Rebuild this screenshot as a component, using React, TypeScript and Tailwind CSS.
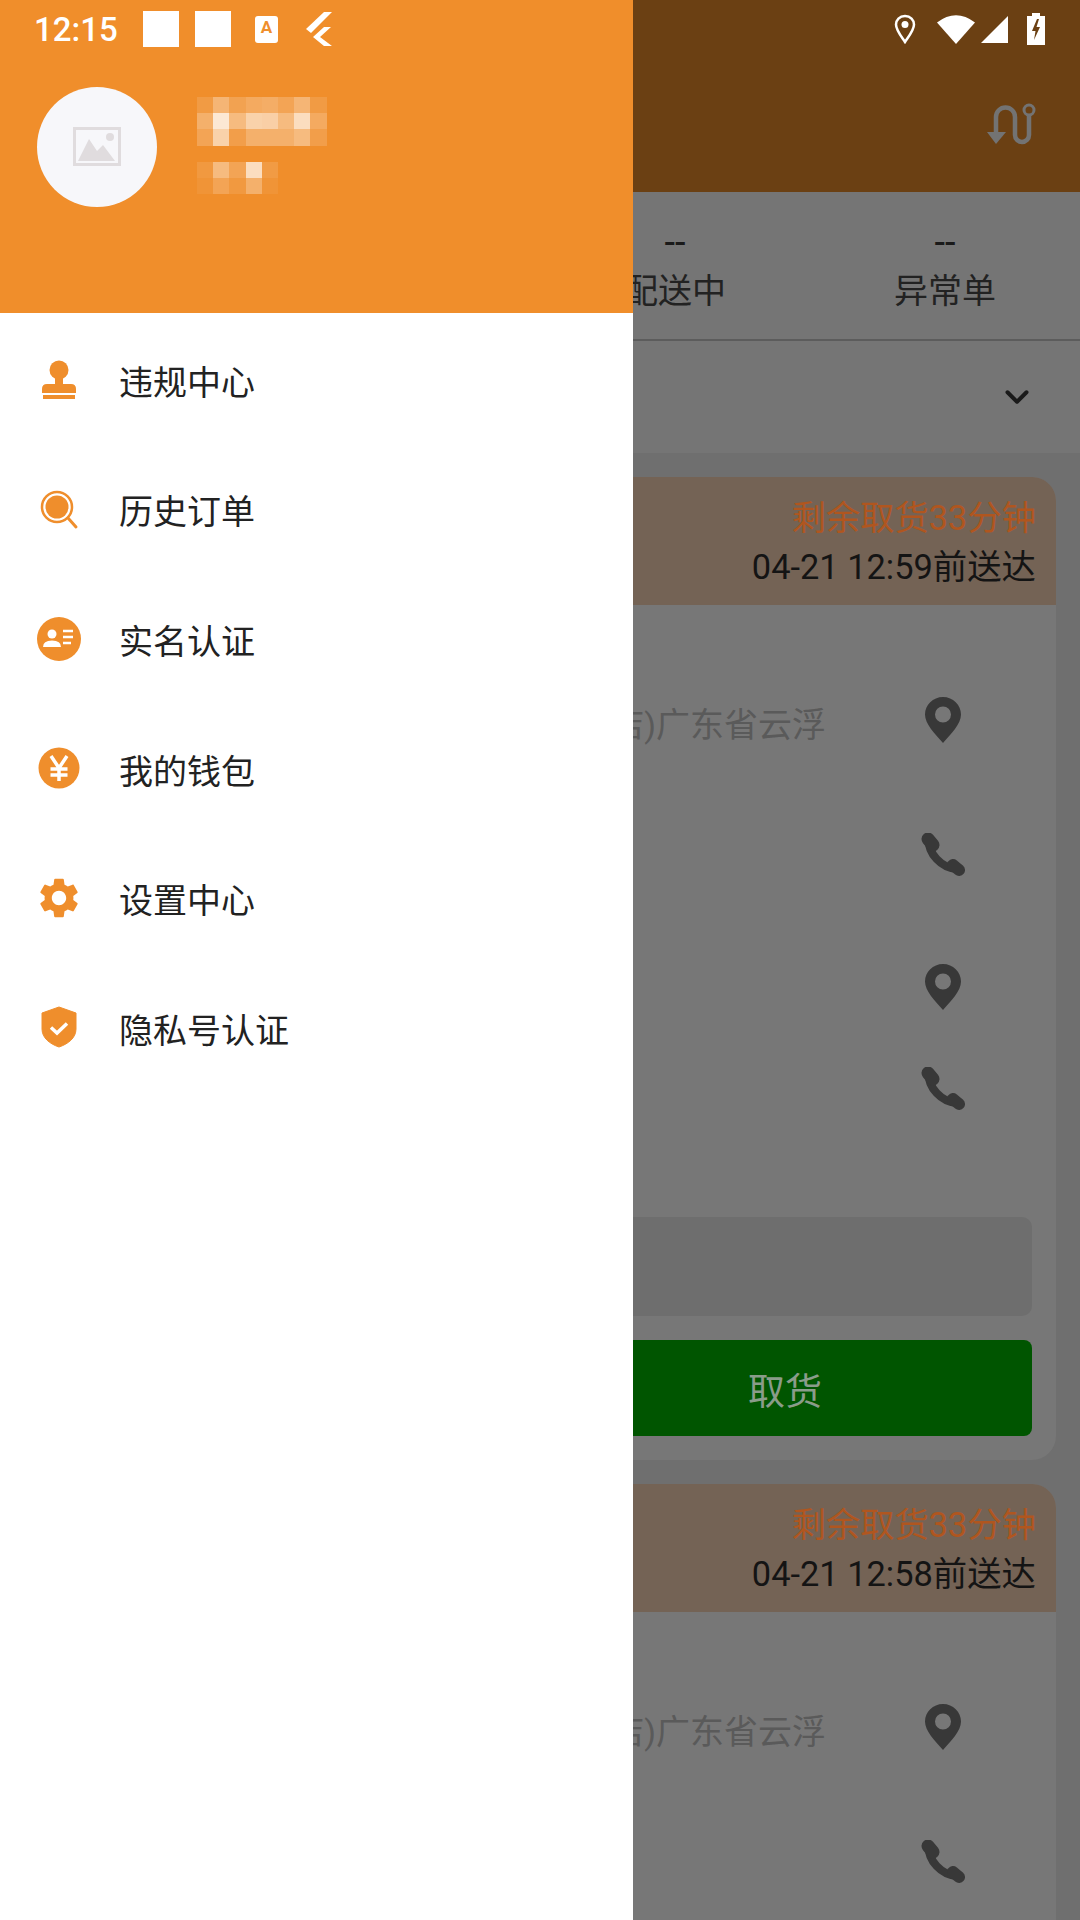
import React from 'react';
import { ChevronDown } from 'lucide-react';

const ORANGE = '#EF8E2C';

const nameCells = [
  [0.12, 0.35, 0.18, 0.25, 0.28, 0.2, 0.35, 0.12],
  [0.3, 0.8, 0.4, 0.6, 0.58, 0.4, 0.7, 0.25],
  [0.2, 0.6, 0.15, 0.3, 0.3, 0.3, 0.4, 0.15],
];
const phoneCells = [
  [0.1, 0.4, 0.2, 0.7, 0.12],
  [0.06, 0.2, 0.1, 0.3, 0.06],
];

const Mosaic: React.FC<{ rows: number[][] }> = ({ rows }) => (
  <div className="flex flex-col">
    {rows.map((row, i) => (
      <div key={i} className="flex">
        {row.map((a, j) => (
          <div key={j} className="w-[16.2px] h-[16.2px]" style={{ backgroundColor: `rgba(255,255,255,${a})` }} />
        ))}
      </div>
    ))}
  </div>
);

const PinIcon = () => (
  <svg width="36" height="46" viewBox="0 0 36 46">
    <path
      fillRule="evenodd"
      fill="#383838"
      d="M18 0C8 0 0 8 0 17.5C0 27 10 37 18 46C26 37 36 27 36 17.5C36 8 28 0 18 0ZM18 9.500A8 8 0 1 1 18 25.500A8 8 0 1 1 18 9.500Z"
    />
  </svg>
);

const PhoneIcon = () => (
  <svg width="44" height="44" viewBox="0 0 44 44" fill="none">
    <path d="M8 7C7 20 20 35 36 36" stroke="#383838" strokeWidth="8" strokeLinecap="round" />
    <path d="M7 6L12 12" stroke="#383838" strokeWidth="13" strokeLinecap="round" />
    <path d="M32 32L38 37" stroke="#383838" strokeWidth="12" strokeLinecap="round" />
  </svg>
);

const IconCell: React.FC<{ children: React.ReactNode }> = ({ children }) => (
  <div className="w-[60px] flex justify-center">{children}</div>
);

// the second card runs off the bottom of the screen, so it stops after the first phone row
const OrderCard: React.FC<{ deadline: string; cut?: boolean }> = ({ deadline, cut }) => (
  <div className="mx-6 mb-6 bg-[#777777] rounded-3xl overflow-hidden">
    <div className="h-[128px] bg-[#746355] pt-[15px] pr-5 flex flex-col items-end leading-[50px]">
      <div className="text-[34.3px] text-[#b0561f] pt-[1px] -mb-[1px]">剩余取货33分钟</div>
      <div className="text-[34.4px] text-[#141414]">{deadline}</div>
    </div>
    <div className={cut ? 'px-6 pt-[92px] pb-[100px]' : 'px-6 pt-[92px] pb-6'}>
      <div className="h-[46px] flex items-center justify-end gap-[87px] pr-[59px]">
        <span className="text-[34px] text-[#5a5a5a] whitespace-nowrap mt-[10px]">(店)广东省云浮</span>
        <IconCell>
          <PinIcon />
        </IconCell>
      </div>
      <div className="mt-[90px] flex justify-end pr-[59px]">
        <IconCell>
          <PhoneIcon />
        </IconCell>
      </div>
      {!cut && (
        <>
          <div className="mt-[87px] flex justify-end pr-[59px]">
            <IconCell>
              <PinIcon />
            </IconCell>
          </div>
          <div className="mt-[57px] flex justify-end pr-[59px]">
            <IconCell>
              <PhoneIcon />
            </IconCell>
          </div>
          <div className="mt-[106px] h-[99px] bg-[#6e6e6e] rounded-[10px]" />
          <div className="mt-6 ml-auto w-[494px] h-[96px] pt-[10px] bg-[#005500] rounded-lg flex items-center justify-center text-[37px] text-[#8a9c8a]">
            取货
          </div>
        </>
      )}
    </div>
  </div>
);

const StampIcon = () => (
  <svg width="48" height="48" viewBox="0 0 48 48" fill={ORANGE}>
    <circle cx="24" cy="12" r="9.500" />
    <rect x="20" y="17" width="8" height="11" />
    <path d="M7 35V31Q7 26 12 26H36Q41 26 41 31V35Z" />
    <rect x="8" y="37" width="32" height="4" />
  </svg>
);

const SearchIcon = () => (
  <svg width="48" height="48" viewBox="0 0 48 48" fill="none">
    <circle cx="22" cy="20" r="15" stroke={ORANGE} strokeWidth="2.500" />
    <circle cx="22" cy="20" r="11.500" fill={ORANGE} />
    <path d="M33 31L41 40" stroke={ORANGE} strokeWidth="3" strokeLinecap="round" />
  </svg>
);

const IdIcon = () => (
  <svg width="48" height="48" viewBox="0 0 48 48">
    <circle cx="24" cy="22" r="22" fill={ORANGE} />
    <circle cx="17" cy="17" r="4.500" fill="#fff" />
    <path d="M8 30Q8 23.500 17 23.500Q26 23.500 26 30Z" fill="#fff" />
    <path d="M28 14H38M28 20H38M28 26H36" stroke="#fff" strokeWidth="2.500" />
  </svg>
);

const YenIcon = () => (
  <svg width="48" height="48" viewBox="0 0 48 48">
    <circle cx="24" cy="21" r="20.500" fill={ORANGE} />
    <path d="M16 9L24 21L32 9M15.500 22H32.500M15.500 28H32.500M24 21V34" fill="none" stroke="#fff" strokeWidth="3.500" />
  </svg>
);

const GearIcon = () => (
  <svg className="-mt-1" width="52" height="52" viewBox="0 0 24 24" fill={ORANGE}>
    <path d="M19.14 12.94c.04-.3.06-.61.06-.94 0-.32-.02-.64-.07-.94l2.03-1.58c.18-.14.23-.41.12-.61l-1.920-3.320c-.12-.22-.37-.29-.59-.22l-2.390.96c-.5-.38-1.030-.7-1.620-.94l-.36-2.540c-.04-.24-.24-.41-.48-.41h-3.840c-.24 0-.43.17-.47.41l-.36 2.540c-.59.24-1.130.57-1.620.94l-2.390-.96c-.22-.08-.47 0-.59.22L2.740 8.870c-.12.21-.08.47.12.61l2.030 1.580c-.05.3-.09.63-.09.94s.02.64.07.94l-2.030 1.580c-.18.14-.23.41-.12.61l1.920 3.320c.12.22.37.29.59.22l2.390-.96c.5.38 1.030.7 1.620.94l.36 2.540c.05.24.24.41.48.41h3.840c.24 0 .44-.17.47-.41l.36-2.540c.59-.24 1.130-.56 1.620-.94l2.390.96c.22.08.47 0 .59-.22l1.920-3.320c.12-.22.07-.47-.12-.61l-2.010-1.580zM12 15.600c-1.980 0-3.600-1.620-3.600-3.600s1.620-3.600 3.600-3.600 3.600 1.620 3.600 3.600-1.620 3.600-3.600 3.600z" />
  </svg>
);

const ShieldIcon = () => (
  <svg className="-mt-1" width="48" height="48" viewBox="0 0 48 48">
    <path d="M24 3L41 9V25C41 34 33 40 24 43C15 40 7 34 7 25V9Z" fill={ORANGE} stroke={ORANGE} strokeLinejoin="round" strokeWidth="1" />
    <path d="M16 23.500L22 29L32 19.500" fill="none" stroke="#fff" strokeWidth="3.500" />
  </svg>
);

const menu = [
  { label: '违规中心', icon: <StampIcon /> },
  { label: '历史订单', icon: <SearchIcon /> },
  { label: '实名认证', icon: <IdIcon /> },
  { label: '我的钱包', icon: <YenIcon /> },
  { label: '设置中心', icon: <GearIcon /> },
  { label: '隐私号认证', icon: <ShieldIcon /> },
];

const StatusBar = () => (
  <div className="absolute top-0 left-0 w-full h-[58px] flex items-center text-white pl-[34px] pr-[35px]">
    <span className="text-[33px] font-medium leading-none w-[109px]">12:15</span>
    <div className="w-9 h-9 bg-white" />
    <div className="w-9 h-9 bg-white ml-4" />
    <div className="w-[23px] h-[27px] ml-[24px] bg-white rounded-[3px] flex justify-center text-[17px] font-bold leading-[22px] text-[#EF8E2C]">
      A
    </div>
    <svg className="ml-[27px]" width="28" height="34" viewBox="0 0 28 34" fill="#fff">
      <polygon points="19,0 27,0 6,21 1,17" />
      <polygon points="19,15 26,15 15,25 27,34 19,34 8,25" />
    </svg>
    <svg className="ml-auto" width="22" height="30" viewBox="0 0 22 30" fill="none">
      <path d="M11 2C5.500 2 2 6 2 10.500C2 16 7 22 11 28C15 22 20 16 20 10.500C20 6 16.500 2 11 2Z" stroke="#fff" strokeWidth="2.500" />
      <circle cx="11" cy="10.500" r="3.500" fill="#fff" />
    </svg>
    <svg className="ml-[21px]" width="38" height="30" viewBox="0 0 38 30" fill="#fff">
      <path d="M0 8.500Q19 -6 38 8.500L19 30Z" />
    </svg>
    <svg className="ml-[6px]" width="27" height="27" viewBox="0 0 27 27" fill="#fff">
      <polygon points="27,0 27,27 0,27" />
    </svg>
    <svg className="ml-[19px]" width="18" height="32" viewBox="0 0 18 32">
      <path d="M5 0H13V3H18V32H0V3H5Z" fill="#fff" />
      <path d="M10 6L5 18H8.500L7 27L13 14H9.500L12 6Z" fill="#6B4013" />
    </svg>
  </div>
);

export default function App() {
  return (
    <div className="relative w-[1080px] h-[1920px] overflow-hidden bg-[#6f6f6f] font-['Roboto','Noto_Sans_CJK_SC',sans-serif]">
      {/* page behind the drawer */}
      <div className="h-[192px] bg-[#6B4013] flex items-end justify-end pr-[44px] pb-[46px]">
        <svg width="50" height="44" viewBox="0 0 50 44" fill="none" stroke="#737373">
          <path d="M10 32V15a9.500 9.500 0 0 1 19 0V33a7 7 0 0 0 14 0V13" strokeWidth="4.500" />
          <circle cx="43" cy="8" r="5" strokeWidth="3" />
          <polygon points="1,30 20,30 10,42" fill="#737373" stroke="none" />
        </svg>
      </div>
      <div className="h-[149px] bg-[#757575] border-b-2 border-[#5c5c5c] grid grid-cols-4 text-center pt-[30px]">
        <div />
        <div />
        <div>
          <div className="text-[38px] leading-[40px] text-[#1a1a1a]">--</div>
          <div className="text-[34px] leading-[58px] text-[#222222]">配送中</div>
        </div>
        <div>
          <div className="text-[38px] leading-[40px] text-[#1a1a1a]">--</div>
          <div className="text-[34px] leading-[58px] text-[#222222]">异常单</div>
        </div>
      </div>
      <div className="h-[112px] bg-[#757575] flex items-center justify-end pr-[44px]">
        <ChevronDown size={38} strokeWidth={2.500} color="#1a1a1a" />
      </div>
      <div className="pt-6">
        <OrderCard deadline="04-21 12:59前送达" />
        <OrderCard deadline="04-21 12:58前送达" cut />
      </div>

      {/* drawer */}
      <div className="absolute top-0 left-0 bottom-0 w-[633px] bg-white flex flex-col">
        <div className="h-[313px] bg-[#F08E2B] pt-[87px] pl-[37px] flex items-start">
          <div className="w-[120px] h-[120px] rounded-full bg-[#f7f7fa] flex items-center justify-center">
            <svg width="48" height="40" viewBox="0 0 48 40" fill="none">
              <rect x="1.500" y="1.500" width="45" height="36" stroke="#e0dcde" strokeWidth="3" />
              <path d="M5 34L16 12L24 24L30 18L42 34Z" fill="#e0dcde" />
              <circle cx="37" cy="10" r="4" fill="#e0dcde" />
            </svg>
          </div>
          <div className="ml-10 pt-[10px] flex flex-col gap-4">
            <Mosaic rows={nameCells} />
            <Mosaic rows={phoneCells} />
          </div>
        </div>
        <div className="pt-[4px]">
          {menu.map((m) => (
            <div key={m.label} className="h-[129.6px] flex items-center pl-[35px]">
              <div className="w-12 h-12 flex items-center justify-center">{m.icon}</div>
              <span className="ml-[36px] mt-[3px] text-[34px] text-[#222222]">{m.label}</span>
            </div>
          ))}
        </div>
      </div>

      <StatusBar />
    </div>
  );
}
